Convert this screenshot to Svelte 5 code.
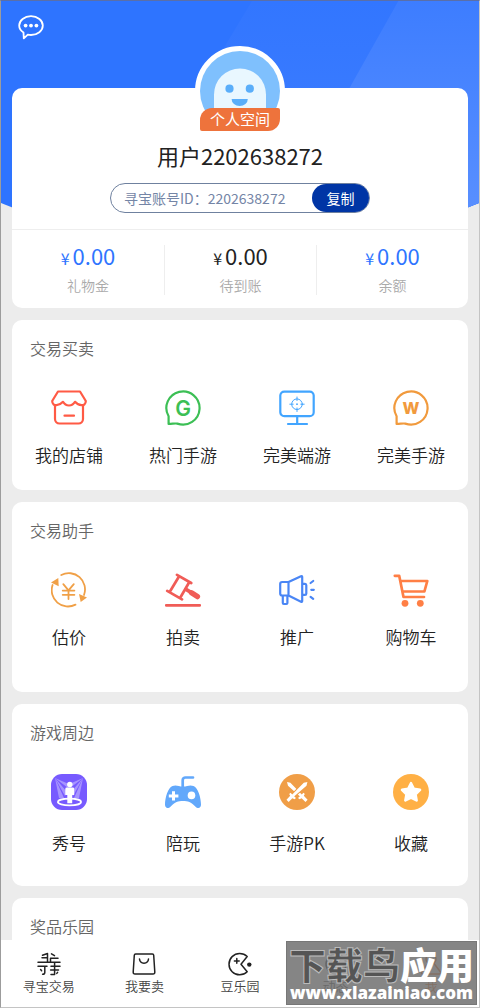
<script lang="ts">
  interface Entry {
    label: string;
    icon: string;
  }

  interface Section {
    id: string;
    title: string;
    entries: Entry[];
  }

  const userId = '2202638272';

  const balances = [
    { label: '礼物金', amount: '0.00', accent: true },
    { label: '待到账', amount: '0.00', accent: false },
    { label: '余额', amount: '0.00', accent: true },
  ];

  const sections: Section[] = [
    {
      id: 'trade',
      title: '交易买卖',
      entries: [
        { label: '我的店铺', icon: 'shop' },
        { label: '热门手游', icon: 'hot' },
        { label: '完美端游', icon: 'desktop' },
        { label: '完美手游', icon: 'mobile' },
      ],
    },
    {
      id: 'helper',
      title: '交易助手',
      entries: [
        { label: '估价', icon: 'appraise' },
        { label: '拍卖', icon: 'auction' },
        { label: '推广', icon: 'promote' },
        { label: '购物车', icon: 'cart' },
      ],
    },
    {
      id: 'around',
      title: '游戏周边',
      entries: [
        { label: '秀号', icon: 'show' },
        { label: '陪玩', icon: 'gamepad' },
        { label: '手游PK', icon: 'versus' },
        { label: '收藏', icon: 'favorite' },
      ],
    },
    { id: 'prizes', title: '奖品乐园', entries: [] },
  ];

  const tabs: Entry[] = [
    { label: '寻宝交易', icon: 'market' },
    { label: '我要卖', icon: 'sell' },
    { label: '豆乐园', icon: 'arcade' },
    { label: '动态', icon: 'feed' },
    { label: '我', icon: 'me' },
  ];

  let activeTab = $state('me');

  function copyId() {
    navigator.clipboard?.writeText(userId);
  }
</script>

{#snippet entryIcon(name: string)}
  <svg class="entry-icon {name}" viewBox="0 0 36 36" aria-hidden="true">
    {#if name === 'shop'}
      <g class="line">
        <path d="M1.2 11C1.2 14 3.3 15.4 5.5 15.2C8.5 15 10.5 13.5 12 11.8C13.5 14.5 15.5 15.5 18 15.5C20.5 15.5 22.5 14.5 24 11.8C25.5 13.5 27.5 15 30.5 15.2C32.7 15.4 34.8 14 34.8 11L29 1.5H7Z" />
        <path d="M4 15V29a4.5 4.5 0 0 0 4.5 4.5h19A4.5 4.5 0 0 0 32 29V15M13.5 25.7h9.5" />
      </g>
    {:else if name === 'hot' || name === 'mobile'}
      <path class="line" d="M3.6 34V26.3A16.6 16.6 0 1 1 12.3 33.6C10 33.2 8 33.8 3.6 34Z" />
      <text class="letter" x="18" y={name === 'hot' ? 26 : 24} text-anchor="middle">{name === 'hot' ? 'G' : 'W'}</text>
    {:else if name === 'desktop'}
      <g class="line">
        <rect x="1.3" y="1.6" width="33.4" height="24.6" rx="4" />
        <path d="M18.2 26.5V34M9 34H28" />
      </g>
      <g class="thin">
        <circle cx="18" cy="14.2" r="5.3" />
        <path d="M18 7v3.5M18 18v3.5M10.8 14.2h3.4M21.8 14.2h3.4" />
      </g>
      <circle class="solid" cx="18" cy="14.2" r="0.9" />
    {:else if name === 'appraise'}
      <path class="line" d="M10.3 3A16.2 16.2 0 0 1 33 23M1.6 13A16.2 16.2 0 0 0 24.5 32.6" />
      <path class="solid" d="M0 10.6L7.3 6L7.7 14.3ZM28 22L36 25.5L29.7 30Z" />
      <path class="line" d="M12.3 12.2L17.5 18.4L22.8 12.2M17.5 18.4V27M11.7 18.6H23.4M11.7 22.8H23.4" />
    {:else if name === 'auction'}
      <path class="line" d="M12 2.8L26.2 11M2.2 18.8L17 27.3M14 4.5L4.8 19.8M24.2 10.3L15.2 25.8M1.2 33.3H34.8" />
      <path class="grip" d="M21 17.4L26 20.4" />
      <path class="grip-end" d="M26.5 20.8L32.4 24.6" />
    {:else if name === 'promote'}
      <path class="line" d="M9.5 10H3.2A2 2 0 0 0 1.2 12V21.5A2 2 0 0 0 3.2 23.5H9.5ZM9.5 10L22 4.2Q23.2 3.8 23.2 5V29Q23.2 30.2 22 29.7L9.5 23.5M23.2 11.8H26Q27.3 11.8 27.3 13.2V21.4Q27.3 22.8 26 22.8H23.2M3.8 23.5V31Q3.8 32 4.8 32H7.4Q8.4 32 8.4 31V23.5M31.6 11L34.2 9M32.3 17.8H34.8M31.6 24.8L34.2 26.8" />
    {:else if name === 'cart'}
      <path class="line" d="M1.8 3.8H6.2L10.5 25H31M7.5 9H34.3L31.4 19.5H9.5" />
      <circle class="solid" cx="12" cy="31.3" r="3.4" />
      <circle class="solid" cx="27.3" cy="31.3" r="3.4" />
    {:else if name === 'show'}
      <rect class="solid" width="36" height="36" rx="11" />
      <g class="beam">
        <path d="M4 4L13 24H8ZM4 4L16 18L14 22ZM4 4L20 11L17 14Z" />
        <path d="M32 4L23 24H28ZM32 4L20 18L22 22ZM32 4L16 11L19 14Z" />
      </g>
      <ellipse class="ring" cx="18.5" cy="28" rx="11.6" ry="3.3" />
      <g class="cut">
        <circle cx="18.8" cy="10.5" r="2.7" />
        <path d="M15.8 13.6h6q1.4 0 1.4 1.4v6h-2v8.3h-4.9V21h-2v-6q0-1.4 1.5-1.4Z" />
      </g>
    {:else if name === 'gamepad'}
      <path class="solid" d="M7.5 12C11.5 10.4 13.5 12.6 18 12.6C22.5 12.6 24.5 10.4 28.5 12C33.2 14 36 24 36 30.5C36 34.4 32.8 35 30.3 32.4C26 28.2 23 27 18 27C13 27 10 28.2 5.7 32.4C3.2 35 0 34.4 0 30.5C0 24 2.8 14 7.5 12Z" />
      <path class="line" d="M17.7 13V6.3a2.8 2.8 0 0 1 2.8-2.8H28" />
      <path class="cut" d="M7 17.2h3v3.2h3.4v3H10v3.2H7v-3.2H3.8v-3H7Z" />
      <circle class="cut" cx="26.5" cy="21.4" r="3.8" />
    {:else if name === 'versus'}
      <circle class="solid" cx="18" cy="18" r="18" />
      <path class="cut" d="M8 8L11.4 8.8L23 20.8L21 22.6L9 11.8ZM19 24L24.5 18.7L25.8 20L24.8 21.8L28.6 25.8L26.5 28L22.6 24.2L20.5 25.3Z" />
      <path class="solid edge" d="M28.2 8L24.6 8.8L13 20.8L15 22.6L27.3 11.8Z" />
      <path class="cut" d="M28.4 8L24.8 8.8L13 20.8L15 22.6L27.5 11.8ZM17 24L11.5 18.7L10.2 20L11.2 21.8L7.5 25.8L9.6 28L13.4 24.2L15.5 25.3Z" />
    {:else if name === 'favorite'}
      <circle class="solid" cx="18" cy="18" r="18" />
      <path class="star" d="M18 9.2L20.8 14.9L27 15.8L22.5 20.2L23.6 26.4L18 23.5L12.4 26.4L13.5 20.2L9 15.8L15.2 14.9Z" />
    {/if}
  </svg>
{/snippet}

{#snippet tabIcon(name: string)}
  <svg class="tab-icon" viewBox="0 0 24 24" aria-hidden="true">
    {#if name === 'market'}
      <path d="M5.5 3.2L10.5 1.5V10M5 5.8H10.5M1 10.2H23M1 14.2H10M7.8 14.2V20.5Q7.8 22.3 5.6 22.3M14.5 1.8L17.5 3.6M13.5 10V6.2H21M14 14.2H23M13.6 18H21.5M17.6 10.2V22.5H14M3.6 17.6L4.6 18.8M20.6 20.4L19.8 21.4" />
    {:else if name === 'sell'}
      <path d="M3.6 2H20.4Q21.6 2 21.7 3.2L22.8 20Q22.9 22 21 22H3Q1.1 22 1.2 20L2.3 3.2Q2.4 2 3.6 2ZM7.5 7C8 12.5 16 12.5 16.5 7" />
    {:else if name === 'arcade'}
      <path d="M19.2 4.5A10.7 10.7 0 1 0 19.2 19.8L13 12.2ZM8.8 6.5V11.3M6.4 8.9H11.2" />
      <circle class="dot" cx="21.3" cy="12.6" r="2.2" />
    {:else if name === 'feed'}
      <circle cx="12" cy="12" r="10" />
      <path d="M15.5 8.5L13.5 13.5L8.5 15.5L10.5 10.5Z" />
    {:else if name === 'me'}
      <circle cx="12" cy="7" r="5" />
      <path d="M9 11.5L2.5 20Q2 22 4 22H20Q22 22 21.5 20L15 11.5" />
    {/if}
  </svg>
{/snippet}

<div class="app">
  <main>
    <svg class="backdrop" viewBox="0 0 480 220" preserveAspectRatio="none" aria-hidden="true">
      <defs>
        <linearGradient id="mid" x1="0" y1="0" x2="0" y2="1">
          <stop offset="0" stop-color="#3276ff" />
          <stop offset="1" stop-color="#407fff" />
        </linearGradient>
        <linearGradient id="right" x1="0" y1="0" x2="0" y2="1">
          <stop offset="0" stop-color="#3d7dff" />
          <stop offset="1" stop-color="#5a90ff" />
        </linearGradient>
        <clipPath id="sheet">
          <path d="M0 0H480V202Q360 252 240 252T0 202Z" />
        </clipPath>
      </defs>
      <g clip-path="url(#sheet)">
        <rect width="480" height="220" fill="#2e74ff" />
        <path d="M252 0H480V220H120Z" fill="url(#mid)" />
        <path d="M399 0H480V220H275Z" fill="url(#right)" />
      </g>
    </svg>

    <header class="topbar">
      <button class="messages" type="button" aria-label="消息">
        <svg viewBox="0 0 26 26" aria-hidden="true">
          <path d="M5.5 17.6C2.9 15.9 1.2 13.4 1.2 10.6C1.2 5.4 6.4 1.2 13 1.2S24.8 5.4 24.8 10.6S19.6 20 13 20C11.8 20 10.8 19.9 9.8 19.6L5.8 23.4Z" />
          <circle cx="7.6" cy="10.6" r="1.9" />
          <circle cx="13" cy="10.6" r="1.9" />
          <circle cx="18.4" cy="10.6" r="1.9" />
        </svg>
      </button>
    </header>

    <section class="card profile">
      <a class="avatar" href="#space">
        <svg viewBox="0 0 80 80" aria-hidden="true">
          <circle cx="40" cy="40" r="40" fill="#7fc0fd" />
          <path d="M14 66V43.5a26 26 0 0 1 52 0V66Z" fill="#e9f7ff" />
          <circle cx="29.5" cy="37.7" r="4.1" fill="#5aaefa" />
          <circle cx="49.8" cy="37.7" r="4.1" fill="#5aaefa" />
          <path d="M31.6 48H47.8A8 7 0 0 1 31.6 48Z" fill="#5aaefa" />
        </svg>
        <span class="space-badge">个人空间</span>
      </a>
      <h1>用户{userId}</h1>
      <div class="account">
        <span class="account-id">寻宝账号ID：{userId}</span>
        <button class="copy" type="button" onclick={copyId}>复制</button>
      </div>
      <ul class="balances">
        {#each balances as balance}
          <li>
            <span class="amount" class:accent={balance.accent}><small>¥</small>{balance.amount}</span>
            <span class="balance-label">{balance.label}</span>
          </li>
        {/each}
      </ul>
    </section>

    {#each sections as section (section.id)}
      <section class="card group {section.id}">
        <h2>{section.title}</h2>
        <div class="entries">
          {#each section.entries as entry (entry.icon)}
            <a class="entry" href="#{entry.icon}">
              {@render entryIcon(entry.icon)}
              <span>{entry.label}</span>
            </a>
          {/each}
        </div>
      </section>
    {/each}
  </main>

  <nav>
    {#each tabs as tab (tab.icon)}
      <button type="button" class="tab" class:active={activeTab === tab.icon} onclick={() => (activeTab = tab.icon)}>
        {@render tabIcon(tab.icon)}
        <span>{tab.label}</span>
      </button>
    {/each}
  </nav>

  <div class="stamp">
    <strong><span>下载鸟</span>应用</strong>
    <em>www.xlazainiao.com</em>
  </div>
</div>

<style>
  :global(body) {
    background: #ececec;
  }

  .app {
    position: relative;
    display: flex;
    flex-direction: column;
    box-sizing: border-box;
    height: 100vh;
    border: 1px solid #9c9c9c;
    border-top-color: #5a6fa8;
    border-right-color: #c4c4c4;
    border-bottom-color: #c4c4c4;
    background: #ececec;
    color: #222;
    font-family: 'Noto Sans CJK SC', sans-serif;
    font-weight: 350;
  }

  main {
    position: relative;
    flex: 1;
    min-height: 0;
    overflow-y: auto;
    scrollbar-width: none;
    padding: 0 11px;
  }

  .backdrop {
    position: absolute;
    top: 0;
    left: 0;
    width: 100%;
    height: 220px;
  }

  button {
    padding: 0;
    border: 0;
    background: none;
    color: inherit;
    font: inherit;
    cursor: pointer;
  }

  a {
    color: inherit;
    text-decoration: none;
  }

  .topbar {
    position: relative;
    box-sizing: border-box;
    height: 87px;
    padding: 14px 6px;
  }

  .messages svg {
    display: block;
    width: 26px;
    height: 26px;
    fill: #fff;
  }

  .messages path {
    fill: none;
    stroke: #fff;
    stroke-width: 1.8;
    stroke-linejoin: round;
  }

  .card {
    position: relative;
    margin-bottom: 12px;
    border-radius: 10px;
    background: #fff;
  }

  .profile {
    display: flex;
    flex-direction: column;
    align-items: center;
  }

  .avatar {
    position: relative;
    box-sizing: border-box;
    width: 90px;
    height: 90px;
    margin-top: -42px;
    border: 5px solid #fff;
    border-radius: 50%;
    background: #fff;
  }

  .avatar svg {
    display: block;
    clip-path: inset(0 0 20px);
  }

  .space-badge {
    position: absolute;
    left: 0;
    right: 0;
    bottom: 0;
    padding-bottom: 2px;
    border-radius: 12px 2px;
    background: #ee733c;
    color: #fff;
    font-size: 15px;
    font-weight: 400;
    line-height: 21px;
    text-align: center;
  }

  h1 {
    margin: 4px 0 13px;
    font-size: 22px;
    font-weight: 400;
    line-height: 30px;
  }

  .account {
    display: flex;
    align-items: center;
    justify-content: space-between;
    box-sizing: border-box;
    width: 260px;
    height: 30px;
    border: 1px solid #6f819f;
    border-radius: 15px;
    color: #7485a6;
    font-size: 14px;
    font-weight: 400;
  }

  .account-id {
    padding-left: 13px;
    white-space: nowrap;
  }

  .copy {
    width: 57px;
    height: 28px;
    border-radius: 14px;
    background: #0035a5;
    color: #fff;
  }

  .balances {
    display: grid;
    grid-template-columns: repeat(3, 1fr);
    align-self: stretch;
    margin: 16px 0 0;
    padding: 15px 0 13px;
    border-top: 1px solid #eee;
    list-style: none;
  }

  .balances li {
    display: flex;
    flex-direction: column;
    align-items: center;
    gap: 10px;
  }

  .balances li + li {
    border-left: 1px solid #eee;
  }

  .amount {
    height: 20px;
    font-size: 22px;
    font-weight: 400;
    line-height: 20px;
  }

  .amount small {
    margin-right: 3px;
    font-size: 16px;
    line-height: 16px;
  }

  .accent {
    color: #2e74ff;
  }

  .balance-label {
    color: #aaa;
    font-size: 14px;
    line-height: 20px;
  }

  .group {
    padding: 16px 0 23px;
  }

  .helper {
    padding-bottom: 43px;
  }

  .around {
    padding-bottom: 31px;
  }

  .prizes {
    padding-bottom: 120px;
  }

  h2 {
    margin: 0 18px 30px;
    color: #666;
    font-size: 16px;
    font-weight: 350;
    line-height: 24px;
  }

  .entries {
    display: grid;
    grid-template-columns: repeat(4, 1fr);
  }

  .entry {
    display: flex;
    flex-direction: column;
    align-items: center;
    gap: 17px;
    font-size: 17px;
    line-height: 24px;
  }

  .around .entry {
    gap: 21px;
  }

  .entry-icon {
    width: 36px;
    height: 36px;
  }

  .shop { color: #ff5a45; }
  .hot { color: #3cbf55; }
  .desktop { color: #42a5ff; }
  .mobile { color: #f19a3d; }
  .appraise { color: #f0a047; }
  .auction { color: #f05c57; }
  .promote { color: #4a86f5; }
  .cart { color: #ff7f45; }
  .show { color: #775aff; }
  .gamepad { color: #62a8fb; }
  .versus { color: #f09e47; }
  .favorite { color: #ffb045; }

  .line,
  .thin,
  .grip,
  .grip-end {
    fill: none;
    stroke: currentColor;
    stroke-width: 2.2;
    stroke-linecap: round;
    stroke-linejoin: round;
  }

  .thin {
    stroke-width: 1;
  }

  .grip {
    stroke-width: 3.6;
  }

  .grip-end {
    stroke-width: 5.4;
  }

  .appraise .line {
    stroke-width: 1.8;
  }

  .auction .line,
  .cart .line,
  .gamepad .line {
    stroke-width: 2.7;
  }

  .solid {
    fill: currentColor;
  }

  .edge {
    stroke: currentColor;
    stroke-width: 2;
  }

  .cut {
    fill: #fff;
  }

  .star {
    fill: #fff;
    stroke: #fff;
    stroke-width: 2.6;
    stroke-linejoin: round;
  }

  .beam {
    fill: #fff;
    opacity: 0.35;
  }

  .ring {
    fill: none;
    stroke: #fff;
    stroke-width: 1.8;
  }

  .letter {
    fill: currentColor;
    font-family: Inter, sans-serif;
    font-size: 21px;
    font-weight: 600;
  }

  .mobile .letter {
    font-size: 16px;
    font-weight: 800;
  }

  nav {
    display: grid;
    grid-template-columns: repeat(5, 1fr);
    height: 67px;
    background: #fff;
  }

  .tab {
    display: flex;
    flex-direction: column;
    align-items: center;
    padding-top: 12px;
    color: #444;
    font-size: 13px;
    line-height: 20px;
  }

  .tab-icon {
    width: 24px;
    height: 24px;
    fill: none;
    stroke: #222;
    stroke-width: 1.5;
    stroke-linecap: round;
    stroke-linejoin: round;
  }

  .tab-icon .dot {
    fill: #222;
    stroke: none;
  }

  .active {
    color: #f07020;
  }

  .active .tab-icon {
    stroke: #f07020;
  }

  .stamp {
    position: absolute;
    right: 2px;
    bottom: 2px;
    display: flex;
    flex-direction: column;
    align-items: center;
    box-sizing: border-box;
    width: 191px;
    height: 64px;
    padding-top: 3px;
    border: 1px solid #777;
    background: rgba(112, 112, 112, 0.85);
    color: #fff;
    white-space: nowrap;
    pointer-events: none;
  }

  .stamp strong {
    font-size: 37px;
    font-weight: 900;
    line-height: 38px;
  }

  .stamp strong span {
    color: #555;
    -webkit-text-stroke: 1px #bbb;
  }

  .stamp em {
    font-family: 'Open Sans', sans-serif;
    font-size: 17px;
    font-style: normal;
    font-weight: 800;
    line-height: 20px;
  }
</style>
